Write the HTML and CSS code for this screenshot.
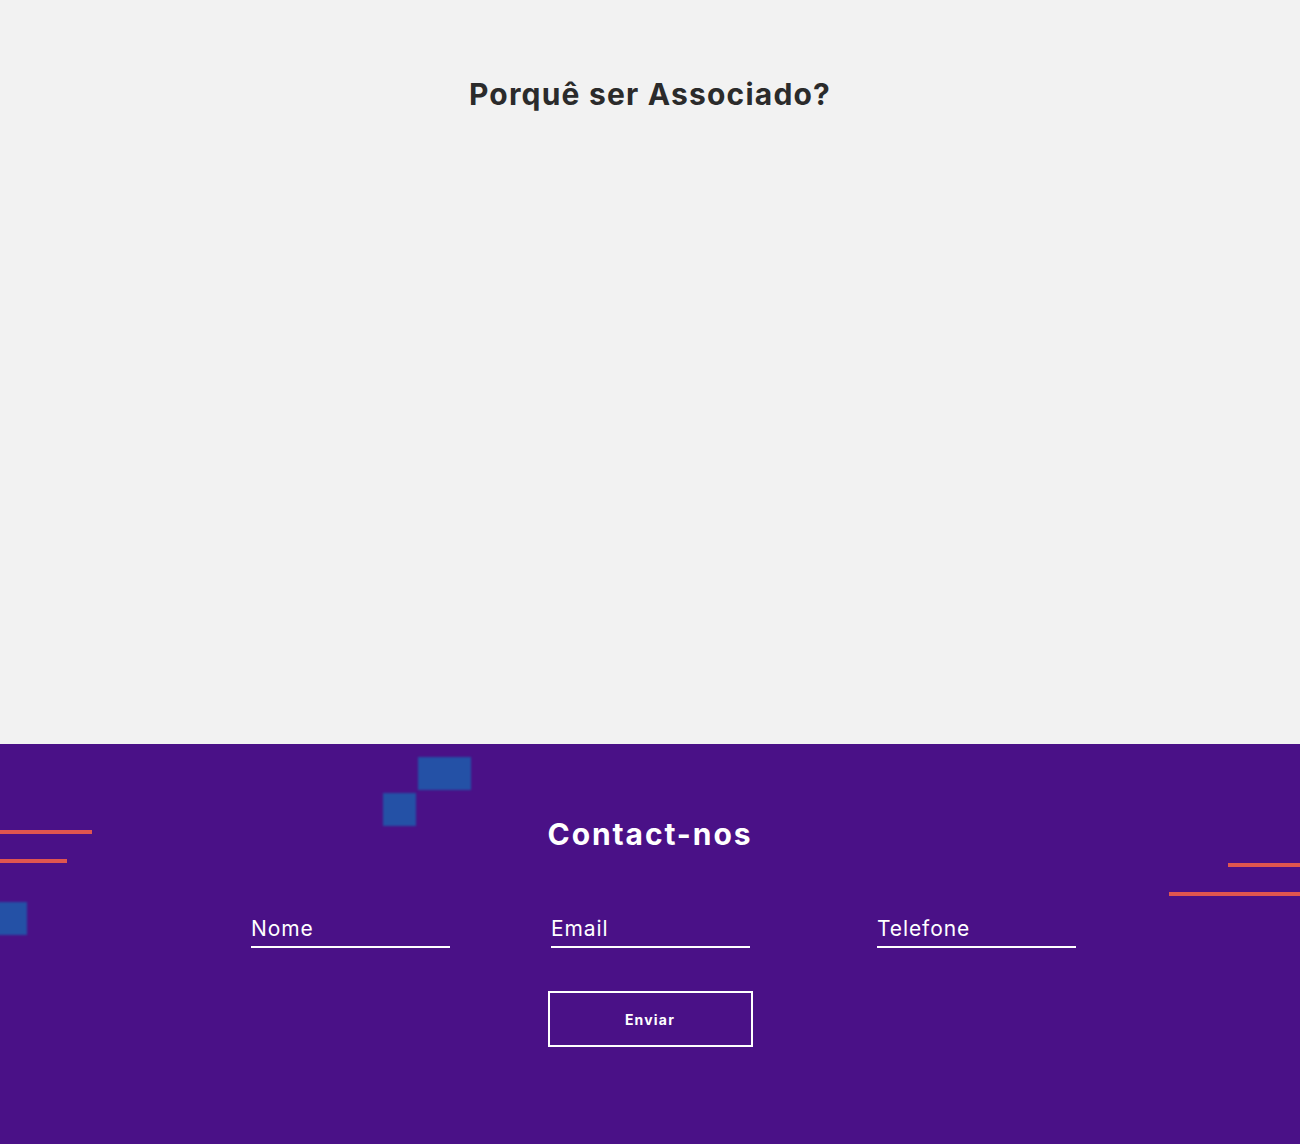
FILE: index.html
```html
<!DOCTYPE html>
<html lang="pt">
<head>
<meta charset="utf-8">
<title>Porquê ser Associado?</title>
<link rel="stylesheet" href="styles.css">
</head>
<body>
<section class="why">
  <h2 class="why-title">Porquê ser Associado?</h2>
</section>
<section class="contact">
  <span class="deco sq sq-a"></span>
  <span class="deco sq sq-b"></span>
  <span class="deco sq sq-c"></span>
  <span class="deco line line-l1"></span>
  <span class="deco line line-l2"></span>
  <span class="deco line line-r1"></span>
  <span class="deco line line-r2"></span>
  <h2 class="contact-title">Contact-nos</h2>
  <form class="contact-form">
    <div class="fields">
      <input class="field field-nome" type="text" placeholder="Nome">
      <input class="field field-email" type="email" placeholder="Email">
      <input class="field field-tel" type="tel" placeholder="Telefone">
    </div>
    <button class="send" type="button">Enviar</button>
  </form>
</section>
</body>
</html>
```
FILE: styles.css
```css
* { box-sizing: border-box; }
html, body { margin: 0; padding: 0; }
body {
  font-family: "Inter", "Noto Sans", "Liberation Sans", sans-serif;
  background: #f2f2f2;
}
.why {
  background: #f2f2f2;
  height: 744px;
  padding-top: 75px;
}
.why-title {
  margin: 0;
  text-align: center;
  font-size: 30px;
  line-height: 38px;
  font-weight: 700;
  color: #2b2b2b;
  letter-spacing: 1.2px;
}
.contact {
  position: relative;
  overflow: hidden;
  background: #4a1187;
  height: 400px;
  padding-top: 72px;
}
.deco { position: absolute; display: block; }
.sq { background: #2451a6; filter: blur(0.8px); }
.sq-a { left: 418px; top: 13px; width: 53px; height: 33px; }
.sq-b { left: 383px; top: 49px; width: 33px; height: 33px; }
.sq-c { left: -6px; top: 158px; width: 33px; height: 33px; }
.line { background: #e0564f; height: 4px; }
.line-l1 { left: 0; top: 86px; width: 92px; }
.line-l2 { left: 0; top: 115px; width: 67px; }
.line-r1 { right: 0; top: 119px; width: 72px; }
.line-r2 { right: 0; top: 148px; width: 131px; }
.contact-title {
  position: relative;
  margin: 0;
  text-align: center;
  color: #ffffff;
  font-size: 30px;
  line-height: 36px;
  font-weight: 700;
  letter-spacing: 1.9px;
}
.contact-form {
  position: relative;
  display: flex;
  flex-direction: column;
  align-items: center;
  margin-top: 63px;
}
.fields {
  display: flex;
  align-self: stretch;
  padding-left: 251px;
}
.field {
  width: 199px;
  background: transparent;
  border: 0;
  border-bottom: 2px solid #ffffff;
  border-radius: 0;
  outline: none;
  color: #ffffff;
  font-family: inherit;
  font-size: 21px;
  line-height: 26px;
  letter-spacing: 0.9px;
  padding: 0 0 5px 0;
  height: 33px;
}
.field::placeholder { color: #ffffff; opacity: 1; }
.field-email { margin-left: 101px; }
.field-tel { margin-left: 127px; }
.send {
  margin-top: 43px;
  width: 205px;
  height: 56px;
  background: transparent;
  border: 2px solid #ffffff;
  color: #ffffff;
  font-family: inherit;
  font-size: 14px;
  font-weight: 700;
  letter-spacing: 1.2px;
  cursor: pointer;
}
```
